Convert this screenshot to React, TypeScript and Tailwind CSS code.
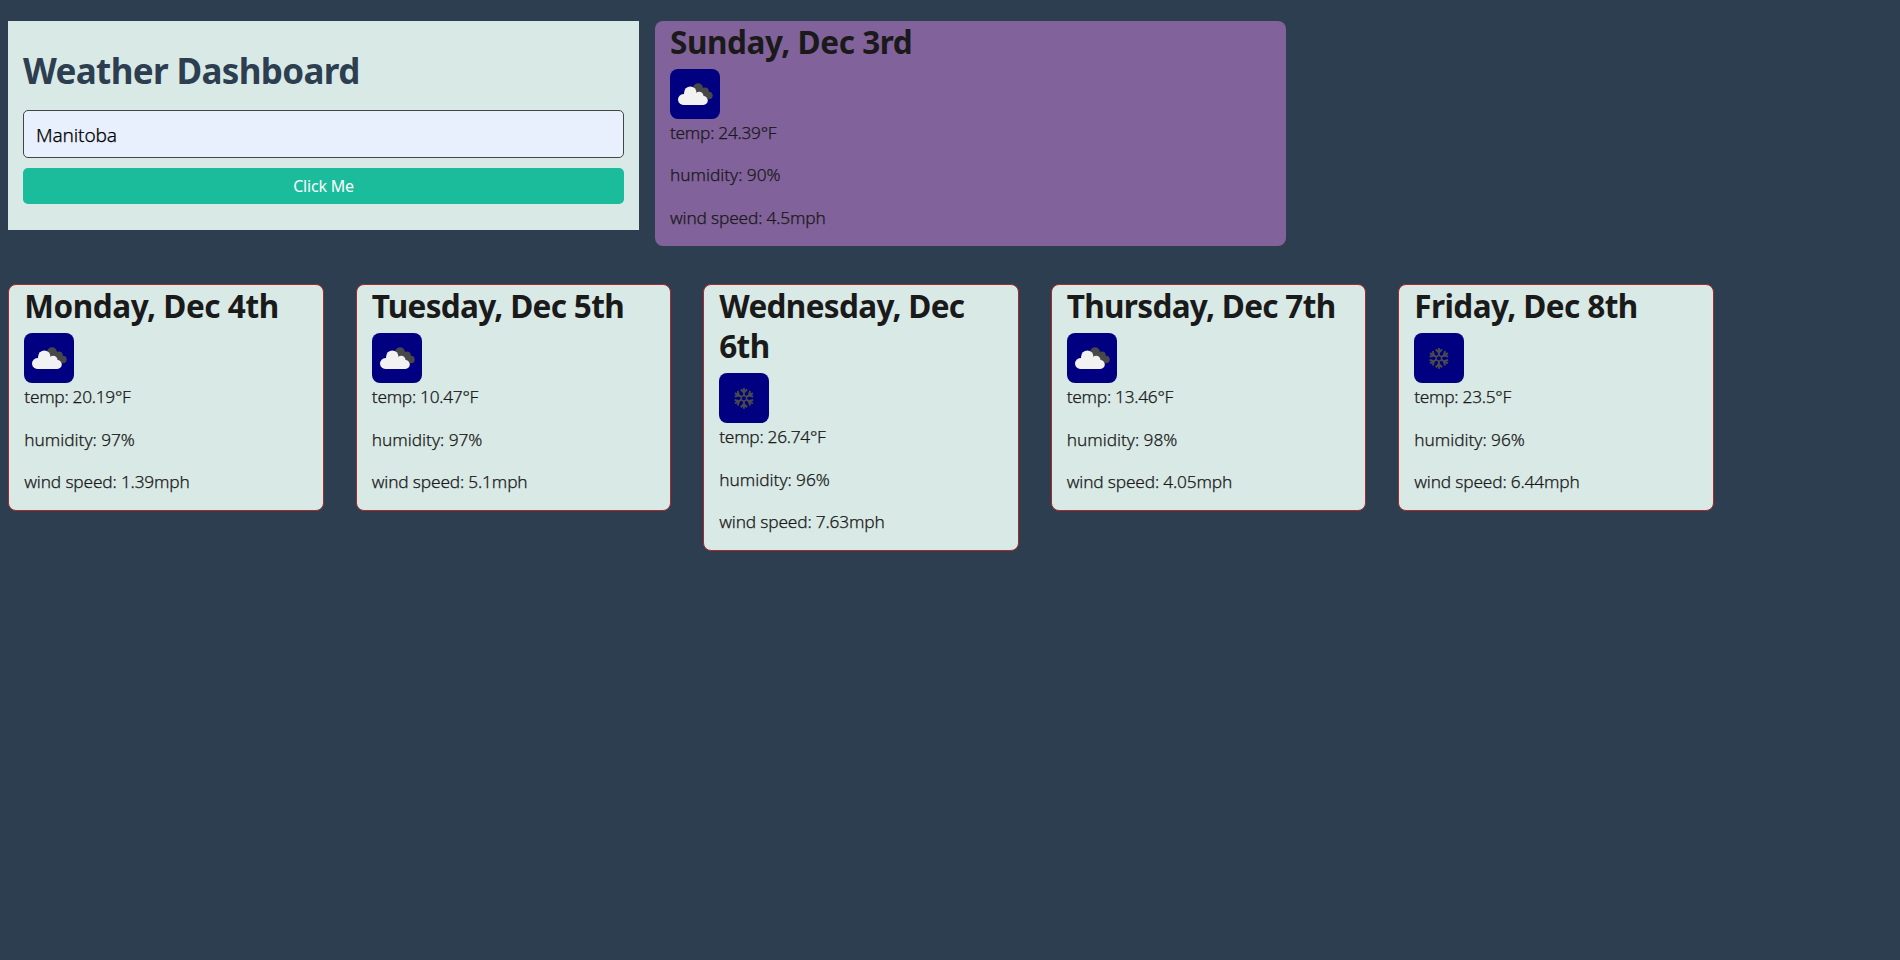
import clsx from "clsx";

type Sky = "clouds" | "snow";

interface Forecast {
  day: string;
  sky: Sky;
  temp: string;
  humidity: string;
  wind: string;
  tracking: string;
}

const today: Forecast = { day: "Sunday, Dec 3rd", sky: "clouds", temp: "24.39", humidity: "90", wind: "4.5", tracking: "tracking-[-0.42px]" };

const week: Forecast[] = [
  { day: "Monday, Dec 4th", sky: "clouds", temp: "20.19", humidity: "97", wind: "1.39", tracking: "tracking-[-0.44px]" },
  { day: "Tuesday, Dec 5th", sky: "clouds", temp: "10.47", humidity: "97", wind: "5.1", tracking: "tracking-[-0.66px]" },
  { day: "Wednesday, Dec 6th", sky: "snow", temp: "26.74", humidity: "96", wind: "7.63", tracking: "tracking-[-0.66px]" },
  { day: "Thursday, Dec 7th", sky: "clouds", temp: "13.46", humidity: "98", wind: "4.05", tracking: "tracking-[-0.67px]" },
  { day: "Friday, Dec 8th", sky: "snow", temp: "23.5", humidity: "96", wind: "6.44", tracking: "tracking-[-0.56px]" },
];

function Clouds() {
  return (
    <svg viewBox="0 0 50 50" className="size-full">
      <g fill="#484848">
        <circle cx="28" cy="19.3" r="5" />
        <circle cx="35" cy="22.2" r="3.8" />
        <circle cx="38.9" cy="26.5" r="3.8" />
        <path d="M28 19 L35 19.5 L39 25 L38 30.3 L28 27 Z" />
      </g>
      <g fill="#f2f2f2">
        <circle cx="13.4" cy="30.5" r="5.4" />
        <circle cx="20.3" cy="23.7" r="6.2" />
        <circle cx="29.2" cy="27" r="4.3" />
        <circle cx="33.4" cy="31.5" r="4.4" />
        <path d="M13.4 35.9 L14.2 24 L26 24.5 L31 27 L33.4 35.9 Z" />
      </g>
    </svg>
  );
}

const ARMS = [0, 60, 120, 180, 240, 300];

function Snow() {
  return (
    <svg viewBox="0 0 50 50" className="size-full">
      <g transform="translate(24.9 25.3)" fill="none" stroke="#4a4a4a" strokeWidth="2">
        <path d="M0 -3 L2.6 -1.5 L2.6 1.5 L0 3 L-2.6 1.5 L-2.6 -1.5 Z" strokeWidth="1.5" />
        {ARMS.map((a) => (
          <path key={a} d="M0 -2.8 V-10.4 M-3.2 -8.9 L0 -5.7 L3.2 -8.9" transform={`rotate(${a})`} />
        ))}
      </g>
    </svg>
  );
}

function Details({ data }: { data: Forecast }) {
  return (
    <>
      <h2 className={clsx("mb-2 translate-y-px text-[31.5px] leading-10 font-bold", data.tracking)}>{data.day}</h2>
      <div className="size-[50px] overflow-hidden rounded-lg bg-[#000080]">{data.sky === "clouds" ? <Clouds /> : <Snow />}</div>
      <div className="flex flex-col gap-[14.2px] pb-[14.2px] text-[17.3px] leading-[28.2px] font-light [-webkit-text-stroke:0.25px_#1a1a1a]">
        <p className="tracking-[-0.27px]">temp: {data.temp}°F</p>
        <p className="tracking-[-0.03px]">humidity: {data.humidity}%</p>
        <p className="tracking-[-0.16px]">wind speed: {data.wind}mph</p>
      </div>
    </>
  );
}

export default function App() {
  return (
    <div className="min-h-screen bg-[#2d3e50] px-2 pt-[21px] font-['Noto_Sans','Open_Sans',sans-serif] text-[#1a1a1a]">
      <div className="flex h-[263.3px] items-start gap-4">
        <form className="h-[209px] w-[631px] bg-[#d9e9e6] px-[15px] pt-[25px]" onSubmit={(e) => e.preventDefault()}>
          <h1 className="mb-[14px] text-[35px] leading-[50px] font-bold tracking-[-0.64px] text-[#2c3e50]">Weather Dashboard</h1>
          <input
            className="block h-12 w-full rounded-[5px] border border-[#444] bg-[#e8f0fe] px-3 pt-0.5 text-[19.1px] font-light tracking-[-0.15px] text-black outline-none [-webkit-text-stroke:0.25px_#000]"
            defaultValue="Manitoba"
          />
          <button className="mt-[10px] block h-9 w-full rounded-[5px] bg-[#1bbc9b] text-base tracking-[-0.2px] text-[#fefefe]">Click Me</button>
        </form>
        <section className="w-[631px] rounded-lg bg-[#81629a] px-[15px]">
          <Details data={today} />
        </section>
      </div>
      <div className="flex items-start gap-[31.9px] pl-[0.3px]">
        {week.map((d) => (
          <section key={d.day} className="w-[315.6px] shrink-0 rounded-lg border border-[#a52a2a] bg-[#d9e9e6] px-[15px]">
            <Details data={d} />
          </section>
        ))}
      </div>
    </div>
  );
}
